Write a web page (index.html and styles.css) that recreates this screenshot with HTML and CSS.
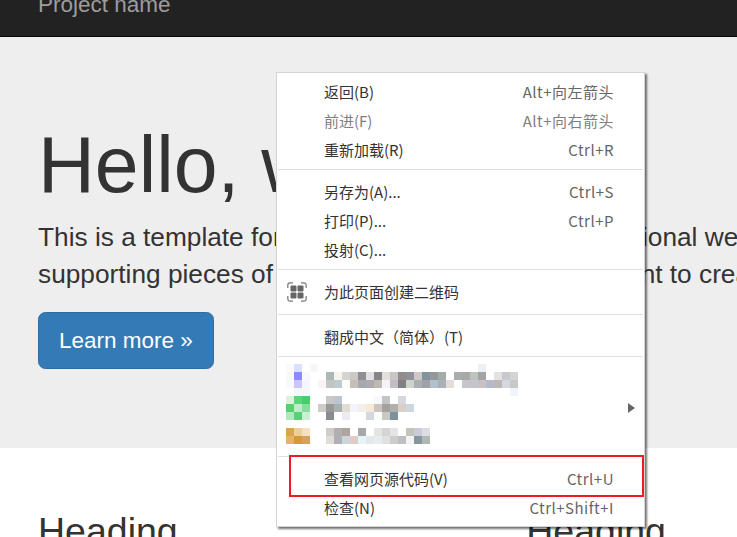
FILE: index.html
```html
<!DOCTYPE html>
<html lang="zh-CN">
<head>
<meta charset="utf-8">
<title>Context menu</title>
<link rel="stylesheet" href="styles.css">
</head>
<body>
<nav class="navbar"><span class="brand">Project name</span></nav>
<section class="jumbotron">
  <h1>Hello, world!</h1>
  <p>This is a template for a simple marketing or informational website. It includes a large callout<br>supporting pieces of content. Use it as a starting point to create something more unique.</p>
  <a class="btn">Learn more »</a>
</section>
<section class="columns">
  <h2>Heading</h2>
  <h2>Heading</h2>
  <h2>Heading</h2>
</section>

<div class="menu">
  <div class="row"><span>返回(B)</span><span class="key">Alt+向左箭头</span></div>
  <div class="row disabled"><span>前进(F)</span><span class="key">Alt+向右箭头</span></div>
  <div class="row"><span>重新加载(R)</span><span class="key">Ctrl+R</span></div>
  <div class="sep"></div>
  <div class="row"><span>另存为(A)...</span><span class="key">Ctrl+S</span></div>
  <div class="row"><span>打印(P)...</span><span class="key">Ctrl+P</span></div>
  <div class="row"><span>投射(C)...</span></div>
  <div class="sep"></div>
  <div class="row row-icon">
    <svg class="qr" viewBox="0 0 20 20" width="20" height="20" fill="none">
      <path d="M.8 6V3A2.2 2.2 0 0 1 3 .8h3M14 .8h3A2.2 2.2 0 0 1 19.2 3v3M19.2 14v3a2.2 2.2 0 0 1-2.2 2.2h-3M6 19.2H3A2.2 2.2 0 0 1 .8 17v-3" stroke="#777" stroke-width="1.2"/>
      <rect x="3.5" y="3.5" width="6" height="6" rx="1" fill="#666"/>
      <rect x="10.5" y="3.5" width="6" height="6" rx="1" fill="#666"/>
      <rect x="3.5" y="10.5" width="6" height="6" rx="1" fill="#666"/>
      <rect x="10.5" y="10.5" width="6" height="6" rx="1" fill="#666"/>
    </svg>
    <span>为此页面创建二维码</span>
  </div>
  <div class="sep"></div>
  <div class="row"><span>翻成中文（简体）(T)</span></div>
  <div class="sep sep-tight"></div>
  <div class="extensions">
    <svg class="mosaic" viewBox="286 358 240 94" width="240" height="94" shape-rendering="crispEdges">
      <rect x="286" y="364" fill="#fafafa"/><rect x="294" y="364" fill="#dbe0ff"/><rect x="310" y="364" fill="#f6f8f6"/><rect x="478" y="364" fill="#eceff4"/>
      <rect x="286" y="372" fill="#f8f8ff"/><rect x="294" y="372" fill="#8b8bff"/><rect x="302" y="372" fill="#f8f8ff"/><rect x="326" y="372" fill="#a9b8b8"/><rect x="334" y="372" fill="#f8f4ec"/><rect x="342" y="372" fill="#d4d4d2"/><rect x="350" y="372" fill="#cdc8c2"/><rect x="358" y="372" fill="#8f8f91"/><rect x="366" y="372" fill="#e0e0e4"/><rect x="374" y="372" fill="#858588"/><rect x="382" y="372" fill="#e3dfdc"/><rect x="390" y="372" fill="#c8c6c4"/><rect x="398" y="372" fill="#948c8c"/><rect x="406" y="372" fill="#92909a"/><rect x="414" y="372" fill="#cfc8c4"/><rect x="422" y="372" fill="#82929e"/><rect x="430" y="372" fill="#94989a"/><rect x="438" y="372" fill="#a2acaa"/><rect x="454" y="372" fill="#a8acaa"/><rect x="462" y="372" fill="#a8a8a8"/><rect x="470" y="372" fill="#bcc4bc"/><rect x="478" y="372" fill="#a4a4a2"/><rect x="494" y="372" fill="#e4e2de"/><rect x="502" y="372" fill="#c8c8d0"/><rect x="510" y="372" fill="#d4d4d4"/>
      <rect x="286" y="380" fill="#f8f8ff"/><rect x="294" y="380" fill="#ccc4fc"/><rect x="302" y="380" fill="#f4f6ff"/><rect x="318" y="380" fill="#f8f4f6"/><rect x="326" y="380" fill="#c4c4c2"/><rect x="334" y="380" fill="#bccad2"/><rect x="342" y="380" fill="#fefcf6"/><rect x="350" y="380" fill="#c4c0b8"/><rect x="358" y="380" fill="#a8a8b0"/><rect x="366" y="380" fill="#b0aaae"/><rect x="374" y="380" fill="#bcb8b2"/><rect x="382" y="380" fill="#f4f4f4"/><rect x="390" y="380" fill="#c4bcc4"/><rect x="398" y="380" fill="#808284"/><rect x="406" y="380" fill="#ccd4cc"/><rect x="414" y="380" fill="#a8b0b4"/><rect x="422" y="380" fill="#a0a0a6"/><rect x="430" y="380" fill="#b0c0cc"/><rect x="438" y="380" fill="#acb0b8"/><rect x="446" y="380" fill="#e4dcd6"/><rect x="462" y="380" fill="#c8c4cc"/><rect x="470" y="380" fill="#c4c4cc"/><rect x="478" y="380" fill="#c8c0c4"/><rect x="486" y="380" fill="#b8b8cc"/><rect x="494" y="380" fill="#bcb8b8"/><rect x="502" y="380" fill="#d4d8dc"/><rect x="510" y="380" fill="#c8c8c8"/>
      <rect x="294" y="388" fill="#f6f6ff"/><rect x="302" y="388" fill="#f6f6ff"/><rect x="510" y="388" fill="#f2f4fc"/>
      <rect x="286" y="396" fill="#d8f4dc"/><rect x="294" y="396" fill="#5cd47c"/><rect x="302" y="396" fill="#48cc6c"/><rect x="326" y="396" fill="#c8c6c6"/><rect x="334" y="396" fill="#bcc4d0"/><rect x="374" y="396" fill="#f6f8fc"/><rect x="382" y="396" fill="#c4c4c2"/><rect x="398" y="396" fill="#d8d8dc"/>
      <rect x="286" y="404" fill="#58d070"/><rect x="294" y="404" fill="#c0ecc8"/><rect x="302" y="404" fill="#88dc9c"/><rect x="318" y="404" fill="#d0ccc8"/><rect x="326" y="404" fill="#989898"/><rect x="334" y="404" fill="#a8b0b0"/><rect x="342" y="404" fill="#e0dcd0"/><rect x="350" y="404" fill="#f4f4fa"/><rect x="358" y="404" fill="#f4eee8"/><rect x="366" y="404" fill="#f8e8d8"/><rect x="374" y="404" fill="#ccc4c0"/><rect x="382" y="404" fill="#a4a09e"/><rect x="390" y="404" fill="#b0b0aa"/><rect x="398" y="404" fill="#d8d0c8"/><rect x="406" y="404" fill="#ccd8e0"/>
      <rect x="286" y="412" fill="#b0e8bc"/><rect x="294" y="412" fill="#58d078"/><rect x="302" y="412" fill="#c8f0d4"/><rect x="326" y="412" fill="#888c90"/><rect x="342" y="412" fill="#ecebef"/><rect x="366" y="412" fill="#d4d8dc"/><rect x="374" y="412" fill="#fcfcf8"/><rect x="382" y="412" fill="#c8c8c4"/><rect x="390" y="412" fill="#7c909e"/>
      <rect x="286" y="428" fill="#dca44c"/><rect x="294" y="428" fill="#ecd09c"/><rect x="302" y="428" fill="#f6e0c4"/><rect x="326" y="428" fill="#d0cccc"/><rect x="334" y="428" fill="#b0b0b0"/><rect x="342" y="428" fill="#b0a49c"/><rect x="358" y="428" fill="#a8a8a8"/><rect x="374" y="428" fill="#e4e4e0"/><rect x="382" y="428" fill="#d4d4d4"/><rect x="390" y="428" fill="#e4e6e6"/><rect x="406" y="428" fill="#c4c4bc"/><rect x="414" y="428" fill="#c8ccd8"/><rect x="422" y="428" fill="#dcdce4"/>
      <rect x="286" y="436" fill="#e4b468"/><rect x="294" y="436" fill="#d89838"/><rect x="302" y="436" fill="#d8a060"/><rect x="326" y="436" fill="#e0dcd8"/><rect x="334" y="436" fill="#b0b0b4"/><rect x="342" y="436" fill="#ccd4dc"/><rect x="350" y="436" fill="#e0ccc0"/><rect x="358" y="436" fill="#e4f4f8"/><rect x="366" y="436" fill="#e4e8e8"/><rect x="374" y="436" fill="#e8ecf0"/><rect x="382" y="436" fill="#e0e0e0"/><rect x="390" y="436" fill="#ccccce"/><rect x="398" y="436" fill="#c0bec0"/><rect x="406" y="436" fill="#f4f4f4"/><rect x="414" y="436" fill="#88949e"/><rect x="422" y="436" fill="#b0b8b4"/>
    </svg>
    <span class="arrow"></span>
  </div>
  <div class="sep"></div>
  <div class="row"><span>查看网页源代码(V)</span><span class="key">Ctrl+U</span></div>
  <div class="row"><span>检查(N)</span><span class="key">Ctrl+Shift+I</span></div>
  <div class="highlight"></div>
</div>
</body>
</html>
```
FILE: styles.css
```css
* { box-sizing: border-box; }
html, body { margin: 0; height: 537px; overflow: hidden; background: #fff; }
body {
  position: relative;
  width: 737px;
  font-family: "Liberation Sans", Arial, sans-serif;
  color: #333;
}
.navbar {
  height: 37px;
  background: #222;
  border-bottom: 1px solid #080808;
  display: flex;
  align-items: flex-end;
  padding: 0 0 19px 38px;
}
.brand { font-size: 22.5px; line-height: 25px; color: #9d9d9d; white-space: nowrap; }
.jumbotron {
  height: 411px;
  background: #eee;
  padding: 85px 0 0 38px;
  white-space: nowrap;
}
h1 { margin: 0 0 10.5px; font-size: 78.75px; line-height: 86.6px; font-weight: 400; color: #333; }
.jumbotron p { margin: 0 0 19px; font-size: 26.25px; line-height: 36.75px; font-weight: 400; color: #333; }
.btn {
  display: inline-block;
  padding: 13px 20px 12px;
  font-size: 22.5px;
  line-height: 30px;
  color: #fff;
  background: #337ab7;
  border: 1px solid #2e6da4;
  border-radius: 7.5px;
}
.columns {
  display: grid;
  grid-template-columns: repeat(3, 488.25px);
  padding: 63px 0 0 38px;
}
h2 { margin: 0; font-size: 37.5px; line-height: 41px; font-weight: 400; color: #333; }

.menu {
  position: absolute;
  left: 276px;
  top: 72px;
  width: 369px;
  height: 455px;
  background: #fff;
  border: 1px solid #d4d4d4;
  box-shadow: 2px 2px 2px rgba(0, 0, 0, .55);
  padding-top: 5px;
  font-family: "Noto Sans CJK SC", "Noto Sans", sans-serif;
  font-size: 15px;
  color: #333;
}
.row {
  height: 29px;
  display: flex;
  align-items: center;
  justify-content: space-between;
  padding: 0 30px 3px 47px;
  white-space: nowrap;
}
.row-icon { height: 32px; justify-content: flex-start; gap: 17px; padding-left: 10px; padding-bottom: 5px; }
.qr { flex: none; }
.key { color: #666; letter-spacing: .5px; }
.disabled, .disabled .key { color: #808080; }
.sep { height: 1px; margin: 4px 1px 8px; background: #e0e0e0; }
.sep-tight { margin-bottom: 1px; }
.extensions { position: relative; height: 94px; padding-left: 9px; }
.mosaic { display: block; }
.mosaic rect { width: 8px; height: 8px; }
.arrow {
  position: absolute;
  right: 9px;
  top: 45px;
  width: 0;
  height: 0;
  border-left: 7px solid #666;
  border-top: 5px solid transparent;
  border-bottom: 5px solid transparent;
}
.highlight {
  position: absolute;
  left: 12px;
  top: 382px;
  width: 355px;
  height: 42px;
  border: 2px solid #ed1c24;
}
```
